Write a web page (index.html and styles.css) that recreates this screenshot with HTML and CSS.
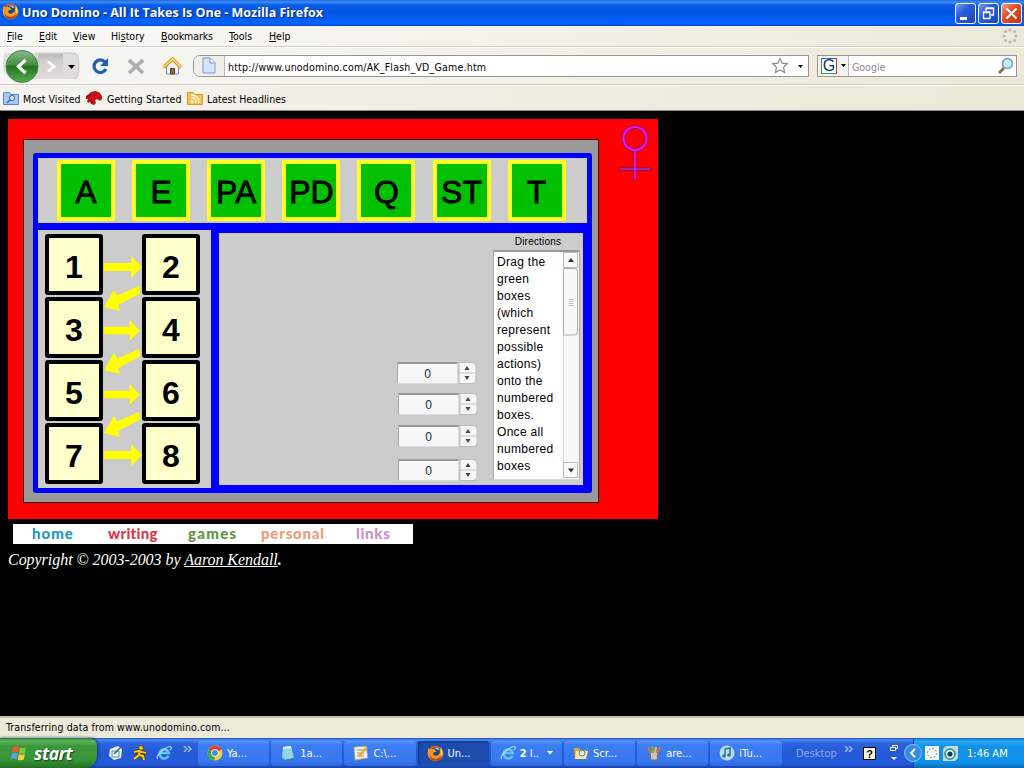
FILE: index.html
```html
<!DOCTYPE html>
<html lang="en">
<head>
<meta charset="utf-8">
<title>Uno Domino - All It Takes Is One</title>
<link rel="stylesheet" href="styles.css">
</head>
<body>
<svg width="0" height="0" class="defs">
  <defs>
    <symbol id="firefox" viewBox="0 0 16 16">
      <circle cx="8" cy="8" r="7.4" fill="#d9600f"/>
      <circle cx="8.6" cy="7" r="5" fill="#26467e"/>
      <path d="M7 3q3-2 5 1l-2 1z" fill="#7fb2dc"/>
      <path d="M1 3l2 1q2-1 4 0l2 2-3 1q-1 3 3 3 4-1 3-5l1-3q3 4 1 8-2 4-6 4.500Q1 14 .7 8z" fill="#f2982a"/>
      <path d="M2 9q2 4 6 4 4 0 6-4-1 6-6 6-5 0-6-6z" fill="#c4440c"/>
      <path d="M13 3q3 4 1 8l-1-3z" fill="#ffd84a"/>
    </symbol>
    <symbol id="ie" viewBox="0 0 16 16">
      <path d="M12.500 10.800A4.600 4.600 0 1 1 12.800 8H5" fill="none" stroke="#63c4f7" stroke-width="2.600"/>
      <path d="M2 14Q-1 12 6 6T15 2q1 1-1 3" fill="none" stroke="#a8dcfa" stroke-width="1.200"/>
    </symbol>
    <symbol id="arrow" viewBox="0 0 38 22">
      <path d="M0 7H27V0L38 11 27 22V15H0z" fill="#ff0"/>
    </symbol>
    <symbol id="spin" viewBox="0 0 19 22">
      <path d="M1 .5h13q4 0 4 4v12q0 5-4 5H1z" fill="#f6f6f6" stroke="#bcbcbc"/>
      <path d="M1 11h17" stroke="#c4c4c4"/>
      <path d="M6.500 8h5L9 4zM6.500 14h5L9 18z" fill="#444"/>
    </symbol>
  </defs>
</svg>

<div class="screen">
  <header class="titlebar">
    <svg class="app-icon" width="17" height="17"><use href="#firefox"/></svg>
    <span class="title">Uno Domino - All It Takes Is One - Mozilla Firefox</span>
    <div class="winbtns">
      <span class="winbtn"><svg width="19" height="19"><path d="M4 14.500h7" stroke="#fff" stroke-width="3"/></svg></span>
      <span class="winbtn"><svg width="19" height="19" fill="none" stroke="#fff"><path d="M7 7V4.500h7.500V11H12M7 4h8" stroke-width="1.300"/><path d="M4.500 8.500h6.500v6h-6.500zM4 8h7.500" stroke-width="1.300"/></svg></span>
      <span class="winbtn close"><svg width="19" height="19"><path d="M4.500 4.500l10 10M14.500 4.500l-10 10" stroke="#fff" stroke-width="2"/></svg></span>
    </div>
  </header>

  <nav class="menubar">
    <span class="m1"><u>F</u>ile</span><span class="m2"><u>E</u>dit</span><span class="m3"><u>V</u>iew</span><span class="m4">Hi<u>s</u>tory</span><span class="m5"><u>B</u>ookmarks</span><span class="m6"><u>T</u>ools</span><span class="m7"><u>H</u>elp</span>
    <svg class="throbber" width="16" height="16" fill="#bdbab2"><circle cx="8" cy="2" r="1.600"/><circle cx="12.500" cy="3.500" r="1.600"/><circle cx="14" cy="8" r="1.600"/><circle cx="12.500" cy="12.500" r="1.600"/><circle cx="8" cy="14" r="1.600"/><circle cx="3.500" cy="12.500" r="1.600"/><circle cx="2" cy="8" r="1.600"/><circle cx="3.500" cy="3.500" r="1.600"/></svg>
  </nav>

  <div class="toolbar">
    <svg class="navbtns" width="188" height="36">
      <defs>
        <linearGradient id="gg" x2="0" y2="1"><stop stop-color="#8fbb8b"/><stop offset=".45" stop-color="#478d43"/><stop offset=".5" stop-color="#257421"/><stop offset="1" stop-color="#57ae4c"/></linearGradient>
        <linearGradient id="kg" x2="0" y2="1"><stop stop-color="#bbb"/><stop offset=".3" stop-color="#d0cfcc"/><stop offset="1" stop-color="#dddcd8"/></linearGradient>
      </defs>
      <path d="M4 6q2-1 12-1h58q5 0 5 13t-5 13H16Q4 31 3 18q0-8 1-12z" fill="#deddd9"/>
      <path d="M35 5h39q5 0 5 13t-5 13" fill="none" stroke="#c7c6c2"/>
      <path d="M38 6h25v24H38z" fill="url(#kg)"/>
      <circle cx="22" cy="18.500" r="16" fill="url(#gg)" stroke="#46824a"/>
      <path d="M25.500 12l-7 6.500 7 6.500" fill="none" stroke="#fff" stroke-width="3.200"/>
      <path d="M48 13.500l6 5-6 5" fill="none" stroke="#fff" stroke-width="2.600"/>
      <path d="M68 17h7l-3.500 4z" fill="#000"/>
      <path d="M105 14a6.300 6.300 0 1 0 1 7" fill="none" stroke="#1c5fb8" stroke-width="3.200"/>
      <path d="M108 10v8h-8z" fill="#1c5fb8"/>
      <path d="M129 12l14 13M143 12l-14 13" stroke="#aeada9" stroke-width="3.600"/>
      <path d="M166.500 18v8h12v-8l-6-6z" fill="#eef3fa" stroke="#7893b8"/>
      <path d="M163.500 19.500l9-8.500 8.500 8.500" fill="none" stroke="#d89b24" stroke-width="3.400" stroke-linejoin="round"/>
      <path d="M163.500 19l9-8 8.500 8" fill="none" stroke="#ffdc73" stroke-width="1.500"/>
      <path d="M170.500 20.500h4V26h-4z" fill="#a56835" stroke="#663b20"/>
    </svg>
    <div class="urlbox">
      <span class="favicon"><svg width="14" height="17"><path d="M1 1h7l5 4.500V16H1z" fill="#d6e5ff" stroke="#7898d6"/><path d="M8 1v5h5" fill="#f6faff" stroke="#7898d6"/></svg></span>
      <span class="url">http://www.unodomino.com/AK_Flash_VD_Game.htm</span>
      <svg width="37" height="20"><path d="M9 2.500l2.200 4.700 5.200.6-3.900 3.500 1.100 5.200L9 13.900l-4.600 2.600 1.100-5.200-3.900-3.500 5.200-.6z" fill="#fff" stroke="#8c8c8c" stroke-width="1.200"/><path d="M27 9h5l-2.500 3z" fill="#000"/></svg>
    </div>
    <div class="searchbox">
      <span class="engine"><span class="g">G</span><svg width="6" height="4"><path d="M0 0h5L2.500 3z"/></svg></span>
      <span class="hint">Google</span>
      <svg width="18" height="18"><path d="M6 11l-5 5" stroke="#966c45" stroke-width="3"/><circle cx="9.500" cy="6.500" r="5" fill="#cbe9fb" stroke="#6f9fc6" stroke-width="1.500"/></svg>
    </div>
  </div>

  <div class="bookmarks">
    <svg width="16" height="15"><path d="M.5 1.500h6l1 2h8v10H.5z" fill="#a9c8f5" stroke="#5b86cb"/><circle cx="9" cy="7" r="2.600" fill="#dcebff" stroke="#3567b7"/><path d="M7 9l-3 3" stroke="#3567b7" stroke-width="1.500"/></svg>
    <span class="b1">Most Visited</span>
    <svg width="17" height="15"><path d="M0 5l3-2 2-2 4-1 4 1 3 4v3l-2 2-3-2-2 1 1 3-2 2-3-1-1-2-2 1-1-2 1-2-2 0-1-2z" fill="#c9131a"/><path d="M1 5.500l2.500-1M4 9.500l2-1M8 4l2 .5M5 12l2-1" stroke="#4a0508"/></svg>
    <span class="b2">Getting Started</span>
    <svg width="16" height="15"><path d="M.5 1.500h6l1 2h8v10H.5z" fill="#fbbf4b" stroke="#df9a25"/><path d="M4 6.500q5 0 5 5.500M4 4q8 0 8 8" fill="none" stroke="#fff" stroke-width="1.300"/><circle cx="5" cy="10.500" r="1.500" fill="#fff"/></svg>
    <span class="b3">Latest Headlines</span>
  </div>

  <main class="page">
    <section class="game">
      <div class="board">
        <div class="frame">
          <div class="actions">
            <span>A</span><span>E</span><span>PA</span><span>PD</span><span>Q</span><span>ST</span><span>T</span>
          </div>
          <div class="lower">
            <div class="slots">
              <div class="col"><span>1</span><span>3</span><span>5</span><span>7</span></div>
              <svg width="39" height="250">
                <use href="#arrow" x="1" y="22" width="38" height="22"/>
                <use href="#arrow" x="1" y="86" width="36" height="21"/>
                <use href="#arrow" x="1" y="150" width="36" height="21"/>
                <use href="#arrow" x="1" y="210" width="38" height="22"/>
                <g fill="#ff0"><path id="diag" d="M36 52L14 61.500 11 56 1 73l16 4-2-6 22-11.500z"/><use href="#diag" y="63"/><use href="#diag" y="126"/></g>
              </svg>
              <div class="col"><span>2</span><span>4</span><span>6</span><span>8</span></div>
            </div>
            <div class="result">
              <div class="steppers">
                <div class="stepper s1"><span>0</span><svg width="19" height="22"><use href="#spin"/></svg></div>
                <div class="stepper s2"><span>0</span><svg width="19" height="22"><use href="#spin"/></svg></div>
                <div class="stepper s3"><span>0</span><svg width="19" height="22"><use href="#spin"/></svg></div>
                <div class="stepper s4"><span>0</span><svg width="19" height="22"><use href="#spin"/></svg></div>
              </div>
              <div class="directions">
                <h2>Directions</h2>
                <div class="textarea">
                  <p>Drag the<br>green<br>boxes<br>(which<br>represent<br>possible<br>actions)<br>onto the<br>numbered<br>boxes.<br>Once all<br>numbered<br>boxes</p>
                  <svg width="16" height="227"><path d="M0 0h16v227H0z" fill="#f8f8f8"/><path d="M.5 0v227" stroke="#ddd"/><path d="M.5 .5h14v15H.5zM.5 210.500h14v15H.5z" fill="#fafafa" stroke="#b8b8b8"/><path d="M.5 16.500h11q3 0 3 3V80q0 3-3 3H.5z" fill="#f8f8f8" stroke="#aaa"/><path d="M5 10h6L8 6zM5 216.500h6l-3 4z" fill="#333"/><path d="M5.500 47.500h5M5.500 49.500h5M5.500 51.500h5M5.500 53.500h5" stroke="#c4c4c4"/></svg>
                </div>
              </div>
            </div>
          </div>
        </div>
      </div>
      <svg class="venus" width="32" height="58" fill="none"><g stroke="#6a108a"><circle cx="16" cy="14.500" r="11.500" stroke-width="3.600"/><path d="M16 26v30M.5 45h31" stroke-width="3"/></g><g stroke="#f015d2" stroke-width="2.200"><circle cx="16" cy="14.500" r="11.500"/><path d="M1 45h30" stroke="#a838a4" stroke-width="1.400"/><path d="M16 26v29.500" stroke-width="1.800"/></g></svg>
    </section>
    <nav class="sitenav">
      <span class="home">home</span><span class="writing">writing</span><span class="games">games</span><span class="personal">personal</span><span class="links">links</span>
    </nav>
    <footer class="copy">Copyright © 2003-2003 by <u>Aaron Kendall</u><b>.</b></footer>
  </main>

  <div class="status"><span>Transferring data from www.unodomino.com...</span></div>

  <div class="taskbar">
    <div class="start">
      <svg width="18" height="18"><path d="M3 3q3-2 6 0L8 8.500q-3-1.500-6 0z" fill="#ef5b2c"/><path d="M10 3.500q3 1.500 6 0L15 9q-3 1.500-6 0z" fill="#7ac943"/><path d="M1.800 9.500q3-1.500 6 0l-1 5.500q-3-1.500-6 0z" fill="#5b9bf0"/><path d="M8.800 10q3 1.500 6 0l-1 5.500q-3 1.500-6 0z" fill="#fbd335"/></svg>
      <span>start</span>
    </div>
    <div class="quick">
      <svg width="16" height="16"><path d="M2 4l8-3 4 3-1 9-7 2-5-4z" fill="#eaf5fb"/><path d="M4 6h7v6H4z" fill="none" stroke="#4e8fa8"/><path d="M6 9l7-7" stroke="#2f6780" stroke-width="1.500"/></svg>
      <svg width="16" height="16"><circle cx="9" cy="3" r="2.400" fill="#ffc800" stroke="#322" stroke-width=".6"/><path d="M2 7l5-1 3 1 4 1M8 7l-2 4-4 3M7 10l4 1 1 4" fill="none" stroke="#322" stroke-width="3.400"/><path d="M2 7l5-1 3 1 4 1M8 7l-2 4-4 3M7 10l4 1 1 4" fill="none" stroke="#ffc800" stroke-width="2.200"/></svg>
      <svg width="16" height="16"><use href="#ie"/></svg>
      <svg class="chev" width="9" height="6" fill="none" stroke="#a9c4f7" stroke-width="1.300"><path d="M1 0l3 3-3 3M5 0l3 3-3 3"/></svg>
    </div>
    <div class="tasks">
      <div class="task"><svg width="16" height="16"><circle cx="8" cy="8" r="7.500" fill="#f6cf34"/><path d="M1.500 4.500a7.500 7.500 0 0 1 13 0L8 8z" fill="#df3e31"/><path d="M1.500 4.500A7.500 7.500 0 0 0 7 15.400L9 9z" fill="#3da64c"/><circle cx="8" cy="8" r="3.500" fill="#4a86d8" stroke="#fff"/></svg><span>Ya...</span></div>
      <div class="task"><svg width="16" height="16"><path d="M3 2l8-1 3 12-9 2-3-3z" fill="#8fd7e6"/><path d="M3 2l8-1v2l-8 1z" fill="#e1f8fc"/><path d="M5 15l9-2v2l-8 1z" fill="#347e99"/></svg><span>1a...</span></div>
      <div class="task"><svg width="16" height="16"><path d="M1 2l12-1 2 12-13 2z" fill="#f1efdf" stroke="#aaa386"/><path d="M4 5h7M4 8h7M4 11h7" stroke="#8b8f99"/><path d="M6 11l8-9" stroke="#e2b12a" stroke-width="2.500"/></svg><span>C:\...</span></div>
      <div class="task active"><svg width="17" height="17"><use href="#firefox"/></svg><span>Un...</span></div>
      <div class="task group"><svg width="16" height="16"><use href="#ie"/></svg><span><b>2</b> I..</span><svg class="drop" width="7" height="4"><path d="M0 0h6L3 3.500z" fill="#fff"/></svg></div>
      <div class="task"><svg width="16" height="16"><path d="M1 3h5l1 2h6v9H2z" fill="#d9a938"/><path d="M3 6h12l-2 8H2z" fill="#ffe69a"/><circle cx="9" cy="8" r="3" fill="#d7eff8" stroke="#777"/></svg><span>Scr...</span></div>
      <div class="task"><svg width="16" height="16"><path d="M4 7h8l-1 8H5z" fill="#c9c6c0" stroke="#8a6b55"/><path d="M5 8L2 2M11 8l3-6" stroke="#d5752c" stroke-width="2"/><path d="M7 8L6 1" stroke="#75b653" stroke-width="2"/><path d="M9 8l1-6" stroke="#e8c247" stroke-width="2"/></svg><span>are...</span></div>
      <div class="task"><svg width="16" height="16"><circle cx="8" cy="8" r="7.500" fill="#b9dcef"/><path d="M6 11V4l5-1v7" fill="none" stroke="#2375a7" stroke-width="1.500"/><circle cx="5" cy="11" r="1.800" fill="#2375a7"/><circle cx="10" cy="10" r="1.800" fill="#2375a7"/></svg><span>iTu...</span></div>
    </div>
    <div class="desk"><span>Desktop</span>
      <svg class="chev" width="9" height="6" fill="none" stroke="#a9c4f7" stroke-width="1.300"><path d="M1 0l3 3-3 3M5 0l3 3-3 3"/></svg>
      <i class="help">?</i>
      <svg class="restore" width="10" height="18"><path d="M3.500 3V1.500h5v3H7M1.500 3.500h5v3h-5z" fill="none" stroke="#fff"/><path d="M2 13h6l-3 3z" fill="#fff"/></svg>
    </div>
    <div class="tray">
      <svg class="hide" width="18" height="18"><circle cx="9" cy="9" r="8.500" fill="#318be8" stroke="#8cc8fb"/><path d="M11 5L7 9l4 4" fill="none" stroke="#fff" stroke-width="2"/></svg>
      <svg width="14" height="14"><path d="M0 0h14v14H0z" fill="#f4f4f4"/><circle cx="7" cy="7" r="4.500" fill="none" stroke="#777" stroke-dasharray="1.500 2"/></svg>
      <svg width="15" height="15"><path d="M0 3l3-3h12v12l-3 3H0z" fill="#cbd9dd"/><circle cx="7" cy="8" r="5" fill="#fff" stroke="#3aa0a6" stroke-width="2"/><circle cx="7" cy="8" r="2.600" fill="#153d52"/></svg>
      <span>1:46 AM</span>
    </div>
  </div>
</div>
</body>
</html>
```

FILE: styles.css
```css
* { box-sizing: border-box; }
body { margin: 0; background: #000; overflow: hidden; font-family: "DejaVu Sans Condensed", "DejaVu Sans", sans-serif; font-stretch: condensed; font-size: 10.5px; color: #000; }
svg { display: block; flex: none; }
span { white-space: nowrap; }
.defs { position: absolute; }
.screen { width: 1024px; height: 768px; display: flex; flex-direction: column; }
.titlebar { height: 26px; flex: none; display: flex; align-items: center; background: linear-gradient(#1c69dc 0, #3c8cf8 2px, #0a5ce6 5px, #0054e3 13px, #0262fa 21px, #0560f8 24px, #0046c4); }
.app-icon { margin: -3px 0 0 2px; }
.title { margin-left: 3px; width: 440px; font: bold 12.500px "Open Sans", sans-serif; color: #fff; text-shadow: 1px 1px 1px #0a2a7a; line-height: 26px; }
.winbtns { margin-left: auto; display: flex; gap: 2px; padding-right: 2px; }
.winbtn { width: 21px; height: 21px; border: 1px solid #fff; border-radius: 3px; background: linear-gradient(135deg, #7c9ff0, #2a5bd8 40%, #1c48b8); }
.winbtn.close { background: linear-gradient(135deg, #f0a088, #e0522c 40%, #bc3312); }
.menubar { height: 21px; flex: none; display: flex; align-items: center; padding-left: 7px; background: linear-gradient(90deg, #f8f8f6, #f3f2ea 50%, #ece9d8); border-bottom: 1px solid #d4d1c3; }
.menubar u { text-decoration-thickness: 1px; text-underline-offset: 1px; }
.m1 { width: 32px; }
.m2 { width: 34px; }
.m3 { width: 38px; }
.m4 { width: 50px; }
.m5 { width: 68px; letter-spacing: -.1px; }
.m6 { width: 40px; }
.throbber { margin: 0 6px 0 auto; }
.toolbar { height: 38px; flex: none; display: flex; align-items: center; border-top: 1px solid #fff; border-bottom: 1px solid #d1cebf; background: linear-gradient(90deg, #f6f6f4, #f2f0e8 50%, #ece9d8); }
.urlbox { margin-left: 5px; width: 616px; height: 22px; display: flex; align-items: center; background: #fff; border: 1px solid #989890; border-radius: 7px 0 0 7px; overflow: hidden; }
.favicon { width: 31px; height: 20px; padding: 1px 0 0 8px; background: #f0efea; border-right: 1px solid #bbb; }
.url { flex: 1; padding: 2px 0 0 3px; letter-spacing: .21px; }
.searchbox { margin-left: 8px; width: 200px; height: 22px; display: flex; align-items: center; background: #fff; border: 1px solid #989890; }
.engine { width: 31px; height: 20px; display: flex; align-items: center; gap: 4px; padding-left: 3px; background: #f5f4ee; border-right: 1px solid #bbb; }
.g { width: 16px; height: 16px; background: #fff; border: 1px solid #2a9a3a; border-color: #3766c8 #d02f2f #2a9a3a #2a9a3a; font: 16px/14px "Liberation Sans", sans-serif; color: #112c84; text-align: center; }
.hint { flex: 1; padding: 2px 0 0 3px; color: #8a8a8a; }
.bookmarks { height: 26px; flex: none; display: flex; align-items: center; padding: 1px 0 0 3px; border-top: 1px solid #fff; border-bottom: 1px solid #8c8a80; background: linear-gradient(90deg, #f5f4f0, #efede2 50%, #ebe8d7); }
.bookmarks span { padding-left: 4px; }
.b1 { width: 67px; }
.b2 { width: 84px; letter-spacing: .1px; }
.page { flex: 1; padding: 8px 0 0 8px; background: #000; }
.game { width: 650px; height: 400px; display: flex; background: #f00; padding: 20px 0 0 15px; }
.board { width: 576px; height: 364px; background: #999; border: 1px solid #301010; padding: 13px 0 0 9px; }
.frame { width: 559px; height: 340px; background: #00f; border-radius: 3px; padding: 5px 5px 0; }
.actions { height: 65px; background: #ccc; display: flex; gap: 17px; padding: 2px 0 0 19px; }
.actions span { width: 58px; height: 61px; border: 4px solid #ff2; background: #00c000; border-radius: 2px; display: flex; align-items: center; justify-content: center; font: 32px "Liberation Sans", sans-serif; -webkit-text-stroke: .8px #000; padding-top: 3px; }
.actions span:nth-child(odd) { margin-right: .2px; }
.lower { display: flex; gap: 8px; padding-top: 7px; }
.slots { width: 173px; height: 258px; background: #ccc; display: flex; padding: 4px 0 0 7px; }
.col { display: flex; flex-direction: column; gap: 2px; }
.col span { width: 58px; height: 61px; border: 4px solid #000; border-radius: 3px; background: #ffc; font: bold 32px/58px "Liberation Sans", sans-serif; text-align: center; }
.result { width: 364px; height: 252px; margin-top: 3px; background: #ccc; display: flex; }
.steppers { padding: 129px 0 0 178px; width: 274px; }
.stepper { display: flex; width: 80px; height: 22px; }
.stepper span { width: 61px; height: 22px; border: 1px solid #ddd; border-top: 2px solid #999; border-left-color: #aaa; background: #f7f7f7; text-align: center; font: 12px/20px "Liberation Sans", sans-serif; color: #0b333c; }
.s2, .s3, .s4 { margin-left: 1px; }
.s2, .s3 { margin-top: 10px; }
.s2 { margin-top: 9px; }
.s4 { margin-top: 12px; }
.directions { width: 87px; }
.directions h2 { margin: 0; height: 17px; font: 10px/17px "Liberation Sans", sans-serif; letter-spacing: .2px; text-align: center; padding-left: 3px; }
.textarea { height: 230px; display: flex; justify-content: space-between; background: #fff; border: 1px solid #aaa; border-top: 2px solid #999; border-bottom-color: #ddd; }
.textarea p { margin: 2px 0 0 3px; width: 66px; font: 12px/17px "Liberation Sans", sans-serif; letter-spacing: .3px; }
.venus { margin: -15px 0 0 20px; }
.sitenav { margin: 5px 0 0 5px; width: 400px; height: 20px; background: #fff; display: flex; font: 900 15px/19px Lato, sans-serif; font-variant-ligatures: none; padding-left: 19px; }
.home { width: 76px; color: #1f97bd; letter-spacing: 1px; }
.writing { width: 80px; color: #dd3644; letter-spacing: .3px; }
.games { width: 73px; color: #60963f; letter-spacing: 1.300px; }
.personal { width: 95px; color: #f19c78; letter-spacing: .8px; }
.links { color: #c592c5; letter-spacing: .7px; }
.copy { font: italic 16px/18px "Liberation Serif", serif; letter-spacing: -.04px; color: #fff; margin-top: 7px; }
.status { height: 22px; flex: none; background: #ece9d8; border-top: 2px solid #c3c0b0; padding-left: 6px; line-height: 19px; letter-spacing: .12px; }
.taskbar { height: 30px; flex: none; display: flex; color: #fff; background: linear-gradient(#1f4fb4 0, #4a8cf4 2px, #2c63df 5px, #2459d6 15px, #245adb 26px, #1941a5); }
.start { width: 97px; display: flex; align-items: center; padding-left: 10px; gap: 6px; border-radius: 0 8px 12px 0; background: linear-gradient(#2d7a2d, #5fb45f 3px, #3c983c 8px, #379437 22px, #226f22); box-shadow: 1px 0 3px #123a80; }
.start span { font: italic bold 17.500px/28px "Open Sans", sans-serif; text-shadow: 1px 1px 2px #143d14; letter-spacing: -.4px; }
.quick { width: 101px; display: flex; align-items: center; gap: 8px; padding-left: 11px; }
.chev { margin: 0 0 9px; }
.quick .chev { margin-left: 3px; }
.tasks { display: flex; gap: 2px; align-items: center; width: 586px; }
.task { width: 71.200px; height: 25px; display: flex; align-items: center; gap: 4px; padding-left: 9px; border-radius: 3px; background: linear-gradient(#5c96fa, #3d7df2 4px, #3877ee 20px, #2f68d8); }
.task span { font-size: 11px; }
.task.active { background: #1e4cae; box-shadow: inset 1px 1px 2px #12357e; }
.drop { margin-left: 4px; }
.desk { width: 129px; display: flex; align-items: center; padding-left: 12px; color: #8fb0ee; font-size: 11px; }
.desk span { width: 48px; }
.desk .help { margin-left: 10px; width: 13px; height: 13px; background: #fffbe0; border: 1px solid #000; color: #000; font: bold 11px/12px "Liberation Sans", sans-serif; text-align: center; }
.restore { margin-left: 13px; }
.tray { flex: 1; display: flex; align-items: center; background: linear-gradient(#0e6ac8, #28a8f5 3px, #1290e8 9px, #1092ec 24px, #0c6ab8); border-left: 1px solid #0a4c98; }
.hide { margin: 0 3px 0 -10px; }
.tray svg + svg + svg { margin-left: 4px; }
.tray span { margin-left: 9px; font-size: 11px; }
```
